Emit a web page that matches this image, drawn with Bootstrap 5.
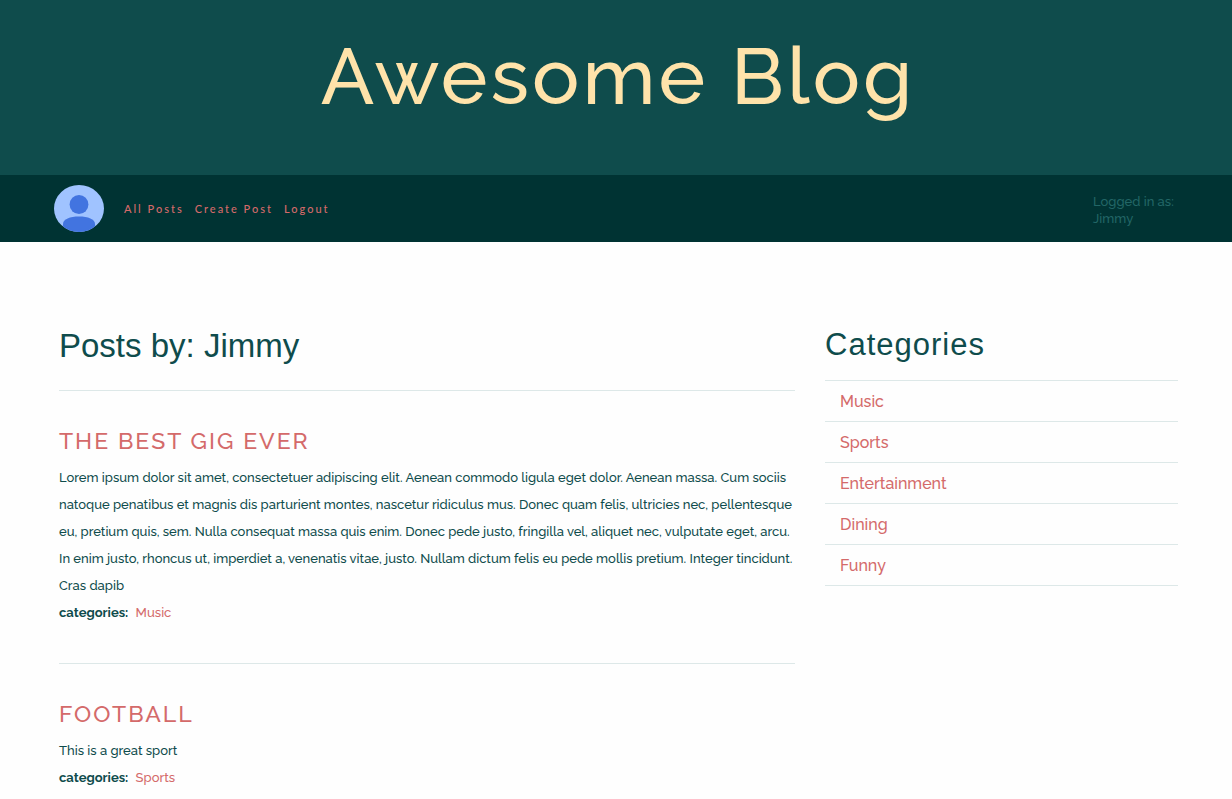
<!DOCTYPE html>
<html lang="en">
<head>
<meta charset="utf-8">
<meta name="viewport" content="width=device-width, initial-scale=1">
<title>Awesome Blog</title>
<link href="https://cdn.jsdelivr.net/npm/bootstrap@5.3.0/dist/css/bootstrap.min.css" rel="stylesheet">
<style>
  body { font-family: Raleway, Lato, "Open Sans", sans-serif; font-size: 13px; font-weight: 500; line-height: 27px; color: #0f4c4c; background: #fefefe; }
  a { color: #d46a6a; text-decoration: none; }
  a:hover { color: #aa3939; }
  .masthead { background: #0f4c4c; color: #ffe3aa; padding: 20px 0 43px 4px; }
  .masthead h1 { font-size: 79px; line-height: 112px; font-weight: 500; letter-spacing: 3px; }
  .site-nav { background: #003333; padding: 10px 54px; }
  .site-nav .nav { gap: 11px; margin-left: 20px; }
  .site-nav .nav-link { padding: 0; color: #d46a6a; font-family: Lato, sans-serif; font-size: 11px; line-height: 20px; font-weight: 500; letter-spacing: 2px; }
  .signed-in { color: #226666; font-size: 13px; line-height: 17px; padding-top: 3px; width: 85px; }
  .page-body { padding: 82px 54px 40px 59px; }
  .page-body .row { --bs-gutter-x: 30px; }
  .page-title, .side-title { font-family: "Liberation Sans", Arial, sans-serif; font-weight: 400; }
  .page-title { font-size: 33px; line-height: 44px; margin-bottom: 22px; }
  .side-title { font-size: 31px; line-height: 42px; letter-spacing: 1px; margin-bottom: 14px; }
  .post { border-top: 1px solid #dde8e8; padding: 32px 0 37px; }
  .post h3 { font-size: 23px; line-height: 36px; font-weight: 500; letter-spacing: 2px; text-transform: uppercase; margin: 0 0 5px; }
  .cat-list { --bs-list-group-bg: transparent; border-top: 1px solid #dde8e8; border-radius: 0; }
  .cat-list .list-group-item { border: 0; border-bottom: 1px solid #dde8e8; padding: 9px 15px 7px; font-size: 16px; line-height: 24px; color: #d46a6a; }
</style>
</head>
<body>
<header class="masthead text-center"><h1 class="m-0">Awesome Blog</h1></header>
<nav class="site-nav d-flex align-items-center" aria-label="Main">
  <svg width="50" height="47" viewBox="0 0 50 47" role="img" aria-label="Profile">
    <defs><clipPath id="face"><ellipse cx="25" cy="23.5" rx="25" ry="23.5"/></clipPath></defs>
    <g clip-path="url(#face)"><path fill="#a0c3ff" d="M0 0h50v47H0z"/><ellipse cx="25" cy="19.5" rx="9.4" ry="9.5" fill="#4274e0"/><path fill="#4274e0" d="M9 47V39C9 34 16 31.500 25 31.500S41 34 41 39V47Z"/></g>
  </svg>
  <ul class="nav">
    <li><a class="nav-link" href="#">All Posts</a></li>
    <li><a class="nav-link" href="#">Create Post</a></li>
    <li><a class="nav-link" href="#">Logout</a></li>
  </ul>
  <div class="signed-in ms-auto">Logged in as: Jimmy</div>
</nav>
<main class="page-body container-fluid">
  <div class="row">
    <div class="col-8">
      <h2 class="page-title">Posts by: Jimmy</h2>
      <article class="post">
        <h3><a href="#">The Best Gig Ever</a></h3>
        <p class="m-0">Lorem ipsum dolor sit amet, consectetuer adipiscing elit. Aenean commodo ligula eget dolor. Aenean massa. Cum sociis natoque penatibus et magnis dis parturient montes, nascetur ridiculus mus. Donec quam felis, ultricies nec, pellentesque eu, pretium quis, sem. Nulla consequat massa quis enim. Donec pede justo, fringilla vel, aliquet nec, vulputate eget, arcu. In enim justo, rhoncus ut, imperdiet a, venenatis vitae, justo. Nullam dictum felis eu pede mollis pretium. Integer tincidunt. Cras dapib</p>
        <div><strong class="me-1">categories:</strong> <a href="#">Music</a></div>
      </article>
      <article class="post">
        <h3><a href="#">Football</a></h3>
        <p class="m-0">This is a great sport</p>
        <div><strong class="me-1">categories:</strong> <a href="#">Sports</a></div>
      </article>
    </div>
    <aside class="col-4">
      <h2 class="side-title">Categories</h2>
      <div class="list-group cat-list">
        <a class="list-group-item" href="#">Music</a>
        <a class="list-group-item" href="#">Sports</a>
        <a class="list-group-item" href="#">Entertainment</a>
        <a class="list-group-item" href="#">Dining</a>
        <a class="list-group-item" href="#">Funny</a>
      </div>
    </aside>
  </div>
</main>
<script src="https://cdn.jsdelivr.net/npm/bootstrap@5.3.0/dist/js/bootstrap.bundle.min.js"></script>
</body>
</html>
